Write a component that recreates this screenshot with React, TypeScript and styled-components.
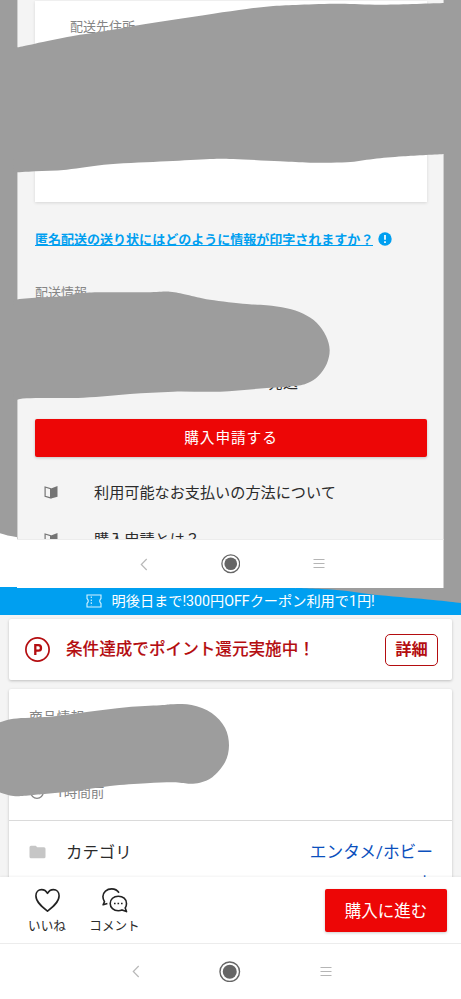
import React from "react";
import styled, { createGlobalStyle } from "styled-components";

const GlobalStyle = createGlobalStyle`
  * { box-sizing: border-box; }
  body {
    margin: 0;
    background: #f4f4f4;
    font-family: Roboto, "Noto Sans CJK JP", sans-serif;
    color: #2b2b2b;
  }
  svg { flex: none; }
`;

const GREY = "#9d9d9d";
const RED = "#ed0606";
const CRIMSON = "#b40d10";
const BLUE = "#009ff0";

type Point = [number, number];

/* Smooth open curve through the given points (Catmull-Rom to Bezier). */
const smooth = (pts: Point[]) =>
  pts.reduce((d, p, i) => {
    if (i === 0) return `M${p[0]} ${p[1]}`;
    const a = pts[Math.max(0, i - 2)];
    const b = pts[i - 1];
    const n = pts[Math.min(pts.length - 1, i + 1)];
    return (
      d +
      ` C${b[0] + (p[0] - a[0]) / 6} ${b[1] + (p[1] - a[1]) / 6}` +
      ` ${p[0] - (n[0] - b[0]) / 6} ${p[1] - (n[1] - b[1]) / 6} ${p[0]} ${p[1]}`
    );
  }, "");

const addressTop: Point[] = [
  [40, 144], [52, 142], [105, 131], [215, 109], [310, 94], [405, 77], [520, 59], [640, 41],
  [740, 27], [820, 18], [900, 14], [1020, 11], [1150, 14], [1335, 9],
];
const addressBottom: Point[] = [
  [1335, 462], [1210, 469], [1120, 477], [1040, 487], [930, 488], [840, 484],
  [700, 477], [630, 477], [500, 484], [330, 493], [200, 509], [105, 514], [40, 518],
];
const shipping: Point[] = [
  [40, 899], [105, 893], [190, 889], [260, 878], [440, 877], [510, 875], [560, 884], [630, 899],
  [740, 912], [800, 916], [860, 925], [910, 941], [950, 968], [978, 1008], [989, 1050], [980, 1092],
  [955, 1128], [925, 1148], [890, 1157], [800, 1164], [660, 1175], [520, 1175], [390, 1182],
  [250, 1193], [80, 1195], [40, 1206],
];
const product: Point[] = [
  [-10, 2171], [40, 2156], [150, 2150], [260, 2136], [380, 2122], [480, 2116], [520, 2113],
  [575, 2115], [635, 2139], [675, 2183], [687, 2236], [675, 2287], [637, 2332], [600, 2348],
  [565, 2351], [520, 2347], [440, 2350], [330, 2358], [220, 2374], [100, 2385], [40, 2388], [-10, 2374],
];
const corner: Point[] = [[880, 1764], [1010, 1770], [1140, 1786], [1300, 1800], [1390, 1810]];

const Page = styled.div`
  position: relative;
  display: flex;
  flex-direction: column;
  width: 461px;
  height: 999px;
  overflow: hidden;
  background: #f4f4f4;
`;

const Backdrop = styled.div`
  flex: none;
  height: 587px;
  padding: 0 17px;
  background: ${GREY};
`;

const Inset = styled.div`
  position: relative;
  z-index: 2;
  display: flex;
  flex-direction: column;
  width: 427px;
  height: 588px;
  overflow: hidden;
  background: #cfcfcf;
`;

const InsetBody = styled.div`
  flex: none;
  display: flex;
  flex-direction: column;
  height: 539px;
  margin: 0 1px;
  padding: 1px 16px 0 17px;
  overflow: hidden;
  background: #f4f4f4;
`;

const AddressCard = styled.section`
  flex: none;
  height: 201px;
  padding: 16px 35px;
  background: #fff;
  box-shadow: 0 1px 3px rgba(0, 0, 0, 0.12);
`;

const Caption = styled.div<{ $size?: number }>`
  font-size: ${(p) => p.$size ?? 13}px;
  line-height: 20px;
  color: #858585;
  white-space: nowrap;
`;

const HelpRow = styled.div`
  display: flex;
  align-items: center;
  gap: 5px;
  height: 20px;
  margin: 30px 0 37px;
`;

const HelpLink = styled.a`
  font: 700 13.02px/13px "Noto Sans CJK JP", sans-serif;
  color: ${BLUE};
  white-space: nowrap;
  border-bottom: 1px solid ${BLUE};
`;

const Dispatch = styled.div`
  margin: 70px 0 0 233px;
  font-size: 15px;
  line-height: 20px;
`;

const RedButton = styled.button<{ $wide?: boolean }>`
  flex: none;
  width: ${(p) => (p.$wide ? "392px" : "122px")};
  height: ${(p) => (p.$wide ? "38px" : "43px")};
  margin: ${(p) => (p.$wide ? "26px 0 12px" : "0")};
  padding: ${(p) => (p.$wide ? "0" : "3px 0 0")};
  border: 0;
  border-radius: 2px;
  background: ${RED};
  box-shadow: 0 1px 3px rgba(0, 0, 0, 0.2);
  color: #fff;
  font-family: inherit;
  font-size: ${(p) => (p.$wide ? "14.7px" : "16.5px")};
  letter-spacing: ${(p) => (p.$wide ? "0.9px" : "0")};
  line-height: 24px;
`;

const GuideRow = styled.div`
  flex: none;
  display: flex;
  align-items: center;
  gap: 36px;
  height: 47.3px;
  padding-left: 9px;
  font-size: 15.15px;
  line-height: 22px;
  white-space: nowrap;
`;

const NavBar = styled.nav<{ $large?: boolean }>`
  flex: none;
  display: grid;
  grid-template-columns: ${(p) => (p.$large ? "93px 95px 97px" : "87px 87px 90px")};
  padding-left: ${(p) => (p.$large ? "89.5px" : "83px")};
  height: ${(p) => (p.$large ? "56px" : "49px")};
  align-items: center;
  justify-items: center;
  background: #fff;
  border-top: 1px solid #ececec;
  border-right: ${(p) => (p.$large ? "0" : "1px solid #cfcfcf")};
`;

const Coupon = styled.div`
  flex: none;
  display: flex;
  align-items: center;
  gap: 9.5px;
  height: 28px;
  padding-left: 86px;
  background: ${BLUE};
  color: #fff;
  font-size: 14.2px;
  line-height: 20px;
  white-space: nowrap;
`;

const Content = styled.main`
  flex: none;
  display: flex;
  flex-direction: column;
  gap: 9px;
  height: 262px;
  padding: 4px 9px 0;
  overflow: hidden;
`;

const Card = styled.section`
  flex: none;
  width: 443px;
  background: #fff;
  border-radius: 2px;
  box-shadow: 0 1px 3px rgba(0, 0, 0, 0.22);
`;

const PointCard = styled(Card)`
  display: flex;
  align-items: center;
  height: 61px;
  padding: 0 14px 0 16px;
  color: ${CRIMSON};
`;

const PointTitle = styled.strong`
  flex: 1;
  padding-left: 16px;
  font-size: 16.6px;
  font-weight: 500;
  line-height: 24px;
  white-space: nowrap;
  -webkit-text-stroke: 0.1px ${CRIMSON};
`;

const DetailButton = styled.button`
  width: 53px;
  height: 32px;
  padding: 1px 0 0;
  border: 1px solid ${CRIMSON};
  border-radius: 5px;
  background: #fff;
  color: ${CRIMSON};
  font: 700 16.3px/24px Roboto, "Noto Sans CJK JP", sans-serif;
`;

const ProductInfo = styled.div`
  display: flex;
  flex-direction: column;
  justify-content: space-between;
  height: 132px;
  padding: 18px 20px 18px;
  border-bottom: 1px solid #dadada;
`;

const Posted = styled.div`
  display: flex;
  align-items: center;
  gap: 12px;
`;

const CategoryRow = styled.div`
  display: flex;
  align-items: flex-start;
  padding: 15px 19px 0 20px;
  font-size: 16.4px;
  line-height: 32px;
`;

const CategoryName = styled.span`
  flex: 1;
  padding: 1px 0 0 20px;
`;

const CategoryLinks = styled.div`
  display: flex;
  flex-direction: column;
  align-items: flex-end;
  padding-top: 1px;
  font-size: 16.7px;
  color: #0b50bd;
`;

const FolderBox = styled.span`
  display: flex;
  align-items: center;
  height: 31px;
`;

const ActionBar = styled.div`
  flex: none;
  display: flex;
  align-items: center;
  height: 66px;
  padding: 0 14px 0 28px;
  background: #fff;
  box-shadow: 0 -1px 2px rgba(0, 0, 0, 0.05);
`;

const Action = styled.div<{ $w: number }>`
  display: flex;
  flex-direction: column;
  align-items: center;
  gap: 1px;
  width: ${(p) => p.$w}px;
  height: 60px;
  padding-top: 5px;
  margin-right: 23px;
  font-size: 12.6px;
  line-height: 20px;
  white-space: nowrap;
`;

const Spacer = styled.div`
  flex: 1;
`;

const Scribbles = styled.svg<{ $front?: boolean }>`
  position: absolute;
  inset: 0;
  z-index: ${(p) => (p.$front ? 3 : 1)};
  pointer-events: none;
`;

const BookIcon = () => (
  <svg width="14" height="16" viewBox="0 0 14 16">
    <path d="M1.1 2 6.6 3.7v9.2L1.1 11.400z" fill="none" stroke="#747474" strokeWidth="1.2" />
    <path d="M7 3.400 13.500 1v10.700L7 13.600z" fill="#747474" />
  </svg>
);

const NavIcons = ({ large }: { large?: boolean }) => {
  const s = large ? 21.5 : 19.5;
  return (
    <NavBar $large={large}>
      <svg width="8" height="13" viewBox="0 0 8 13">
        <path d="M6.7 1 1.3 6.5 6.7 12" fill="none" stroke="#b8b8b8" strokeWidth="1.2" />
      </svg>
      <svg width={s} height={s} viewBox="0 0 20 20">
        <circle cx="10" cy="10" r="9.1" fill="#fff" stroke="#666" strokeWidth="1.3" />
        <circle cx="10" cy="10" r="6.5" fill="#666" />
      </svg>
      <svg width="12" height="12" viewBox="0 0 12 12">
        <path d="M.5 1.5h11M.5 5.5h11M.5 9.5h11" stroke="#b5b5b5" strokeWidth="1" />
      </svg>
    </NavBar>
  );
};

export default function App() {
  return (
    <>
      <GlobalStyle />
      <Page>
        <Backdrop>
          <Inset>
            <InsetBody>
              <AddressCard>
                <Caption>配送先住所</Caption>
              </AddressCard>
              <HelpRow>
                <HelpLink>匿名配送の送り状にはどのように情報が印字されますか？</HelpLink>
                <svg width="14" height="14" viewBox="0 0 14 14">
                  <circle cx="7" cy="7" r="6.7" fill={BLUE} />
                  <path d="M7 3v4.8M7 9.2v1.7" stroke="#fff" strokeWidth="1.7" />
                </svg>
              </HelpRow>
              <Caption>配送情報</Caption>
              <Dispatch>発送</Dispatch>
              <RedButton $wide>購入申請する</RedButton>
              <GuideRow>
                <BookIcon />
                利用可能なお支払いの方法について
              </GuideRow>
              <GuideRow>
                <BookIcon />
                購入申請とは？
              </GuideRow>
            </InsetBody>
            <NavIcons />
          </Inset>
        </Backdrop>

        <Coupon>
          <svg width="16" height="14" viewBox="0 0 16 14">
            <path
              d="M1 1h14v3.5c-1.700 1.600-1.700 3.400 0 5V13H1V9.500c1.700-1.600 1.700-3.400 0-5z"
              fill="none"
              stroke="#d8f4ff"
              strokeWidth="1.1"
            />
            <path d="M5.3 2.5v9" stroke="#d8f4ff" strokeWidth="1.1" strokeDasharray="1.6 1.3" />
          </svg>
          明後日まで!300円OFFクーポン利用で1円!
        </Coupon>

        <Content>
          <PointCard>
            <svg width="25" height="25" viewBox="0 0 25 25">
              <circle cx="12.5" cy="12.5" r="11.6" fill="none" stroke={CRIMSON} strokeWidth="1.7" />
              <path
                d="M10.300 18V8.200h3.100a2.600 2.700 0 0 1 0 5.400h-3"
                fill="none"
                stroke={CRIMSON}
                strokeWidth="2.3"
              />
            </svg>
            <PointTitle>条件達成でポイント還元実施中！</PointTitle>
            <DetailButton>詳細</DetailButton>
          </PointCard>
          <Card>
            <ProductInfo>
              <Caption $size={13.8}>商品情報</Caption>
              <Posted>
                <svg width="15" height="15" viewBox="0 0 15 15">
                  <circle cx="8" cy="7" r="6.3" fill="none" stroke="#858585" strokeWidth="1.2" />
                  <path d="M8 3v4l3 2" fill="none" stroke="#858585" />
                </svg>
                <Caption $size={13.6}>1時間前</Caption>
              </Posted>
            </ProductInfo>
            <CategoryRow>
              <FolderBox>
                <svg width="17" height="14" viewBox="0 0 17 14">
                  <path
                    d="M2 .7h4.700l1.600 1.500H15a1.500 1.500 0 0 1 1.500 1.500v8a1.500 1.500 0 0 1-1.500 1.500H2A1.500 1.500 0 0 1 .5 11.700V2.200A1.500 1.500 0 0 1 2 .7z"
                    fill="#c6c6c6"
                  />
                </svg>
              </FolderBox>
              <CategoryName>カテゴリ</CategoryName>
              <CategoryLinks>
                <span>エンタメ/ホビー</span>
                <span>本</span>
              </CategoryLinks>
            </CategoryRow>
          </Card>
        </Content>

        <ActionBar>
          <Action $w={38}>
            <svg width="27" height="30" viewBox="0 0 27 30">
              <path
                d="M13.500 26.200C8.500 22.300 1.900 17.300 1.900 10.800c0-3.700 2.500-6.200 5.700-6.200 2.600 0 4.700 1.500 5.900 3.800 1.200-2.300 3.300-3.800 5.900-3.800 3.200 0 5.700 2.500 5.700 6.200 0 6.500-6.600 11.500-11.600 15.400z"
                fill="none"
                stroke="#222"
                strokeWidth="1.6"
                strokeLinejoin="round"
              />
            </svg>
            いいね
          </Action>
          <Action $w={51}>
            <svg width="27" height="30" viewBox="0 0 27 30" fill="none" stroke="#222" strokeWidth="1.6" strokeLinejoin="round">
              <path d="M18 7.800C16.300 5.100 13.700 3.900 10.700 3.900 5.800 3.900 1.900 7.200 1.900 11.600c0 2.100.7 3.700 1.600 5.100L2.100 19.800l4.300-1.400" />
              <path d="M17.300 11.200c-4.700 0-8.100 3-8.100 7.200s3.400 7.300 8.100 7.300c1.300 0 2.500-.2 3.700-.8l4.500 1.700-1.300-3.600c.8-1.200 1.300-2.700 1.300-4.600 0-4.200-3.500-7.200-8.200-7.200z" />
              <path d="M13 18.500h1.600M16.500 18.500h1.600M20 18.500h1.600" strokeWidth="1.7" />
            </svg>
            コメント
          </Action>
          <Spacer />
          <RedButton>購入に進む</RedButton>
        </ActionBar>
        <NavIcons large />

        <Scribbles width="461" height="999" viewBox="0 0 1383 2997">
          <path d="M0 1600Q20 1607 52 1612V1761H0z" fill="#fff" />
          <path d={`${smooth(corner)}V1750H880z`} fill={GREY} />
        </Scribbles>
        <Scribbles $front width="461" height="999" viewBox="0 0 1383 2997">
          <path d={`${smooth(addressTop)}L${smooth(addressBottom).slice(1)}z`} fill={GREY} />
          <path d={`${smooth(shipping)}z`} fill={GREY} />
          <path d={`${smooth(product)}z`} fill={GREY} />
        </Scribbles>
      </Page>
    </>
  );
}
